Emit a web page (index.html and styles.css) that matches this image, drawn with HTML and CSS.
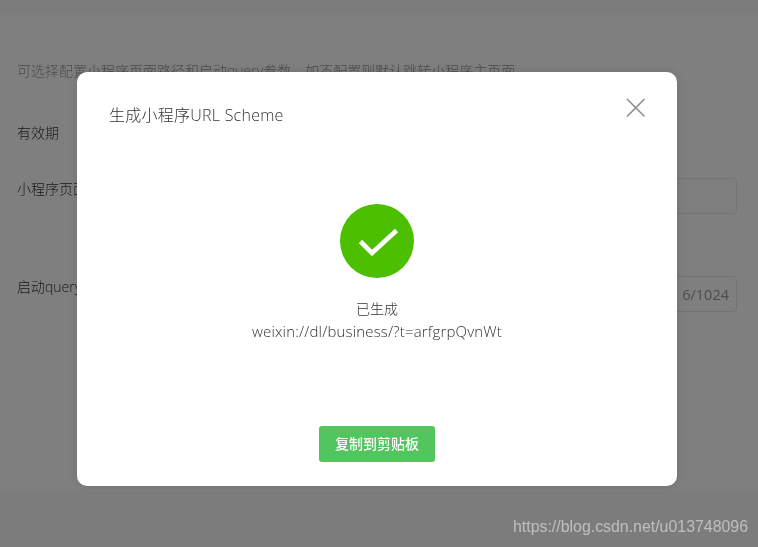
FILE: index.html
```html
<!DOCTYPE html>
<html lang="zh-CN">
<head>
<meta charset="utf-8">
<title>生成小程序URL Scheme</title>
<link rel="stylesheet" href="styles.css">
</head>
<body>
<div class="page">
  <header class="top"></header>
  <main class="content">
    <p class="hint">可选择配置小程序页面路径和启动query参数，如不配置则默认跳转小程序主页面</p>
    <div class="row row-valid"><span class="label">有效期</span></div>
    <div class="row row-path"><span class="label">小程序页面</span><div class="field"></div></div>
    <div class="row row-query"><span class="label">启动query</span><div class="field"><span class="count">6/1024</span></div></div>
  </main>
  <footer class="bottom"></footer>
</div>
<div class="mask"></div>
<section class="dialog">
  <div class="dialog-head">
    <h2 class="dialog-title">生成小程序URL Scheme</h2>
    <button class="close" aria-label="关闭">
      <svg width="20" height="20" viewBox="0 0 20 20"><path d="M1 1 L18.5 18.5 M18.5 1 L1 18.5" stroke="#8a8a8a" stroke-width="1.5" fill="none"/></svg>
    </button>
  </div>
  <div class="dialog-body">
    <svg class="ok" width="74" height="74" viewBox="0 0 74 74"><circle cx="37" cy="37" r="37" fill="#4cbf00"/><path d="M20.5 37.5 L32 49 L56.5 26.5" stroke="#fff" stroke-width="4.6" fill="none"/></svg>
    <p class="msg">已生成<br><span class="link">weixin://dl/business/?t=arfgrpQvnWt</span></p>
  </div>
  <div class="dialog-foot"><button class="copy">复制到剪贴板</button></div>
</section>
<div class="watermark">https://blog.csdn.net/u013748096</div>
</body>
</html>
```
FILE: styles.css
```css
* { box-sizing: border-box; }
html, body { margin: 0; height: 100%; overflow: hidden; }
body {
  font-family: "Open Sans", "Noto Sans CJK SC", sans-serif;
  font-size: 14px;
  font-weight: 300;
  color: #333;
}
.page { height: 547px; display: flex; flex-direction: column; background: #fff; }
.top { height: 15px; background: #f6f8f6; }
.content { flex: 1; padding: 45px 21px 0 17px; will-change: opacity; }
.hint { margin: 0; line-height: 22px; color: #999; }
.row { display: flex; align-items: flex-start; justify-content: space-between; }
.row-valid { margin-top: 40px; height: 22px; }
.row-path { margin-top: 34px; height: 36px; }
.row-query { margin-top: 62px; height: 36px; }
.label { line-height: 22px; }
.field {
  width: 300px; height: 36px; border: 1px solid #e7e7e7; border-radius: 4px;
  display: flex; align-items: center; justify-content: flex-end; padding-right: 7px;
}
.count { color: #9a9a9a; font-size: 14.5px; font-weight: 400; }
.bottom { height: 55px; background: #f6f8f6; }
.mask { position: fixed; inset: 0; background: rgba(0,0,0,.5); }
.dialog {
  position: fixed; left: 77px; top: 72px; width: 600px; height: 414px;
  background: #fff; border-radius: 10px;
  box-shadow: 0 0 12px rgba(0,0,0,.12);
  display: flex; flex-direction: column;
}
.dialog-head { display: flex; justify-content: space-between; padding: 30px 30px 0 32px; height: 132px; }
.dialog-title { margin: 0; font-size: 16px; font-weight: 300; line-height: 26px; letter-spacing: .25px; color: #333; }
.close { border: 0; background: none; padding: 0; margin-top: -4px; margin-right: 1px; width: 20px; height: 20px; }
.close svg { display: block; }
.dialog-body { flex: 1; display: flex; flex-direction: column; align-items: center; }
.ok { display: block; }
.msg { margin: 20px 0 0; text-align: center; line-height: 22px; color: #333; }
.link { font-size: 15px; letter-spacing: .17px; }
.dialog-foot { display: flex; justify-content: center; padding-bottom: 24px; }
.copy {
  width: 116px; height: 36px; border: 0; border-radius: 3px; background: #52c55e;
  color: #fff; font: 500 14px/32px "Noto Sans CJK SC", sans-serif; padding: 0 0 2px;
}
.watermark {
  position: fixed; right: 10px; top: 517px;
  font: 15.9px/20px "Liberation Sans", sans-serif; color: rgba(255,255,255,.5);
}
```
